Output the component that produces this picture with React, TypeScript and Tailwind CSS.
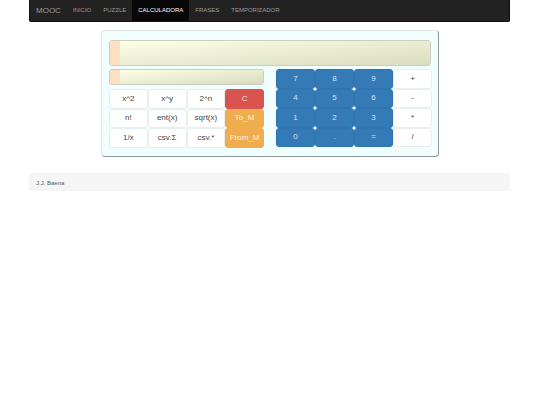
const nav = ["INICIO", "PUZZLE", "CALCULADORA", "FRASES", "TEMPORIZADOR"];
const leftKeys: [string, string][] = [
  ["x^2", "w"], ["x^y", "w"], ["2^n", "w"], ["C", "r"],
  ["n!", "w"], ["ent(x)", "w"], ["sqrt(x)", "w"], ["To_M", "o"],
  ["1/x", "w"], ["csv.Σ", "w"], ["csv.*", "w"], ["From_M", "o"],
];
const rightKeys: [string, string][] = [
  ["7", "b"], ["8", "b"], ["9", "b"], ["+", "w"],
  ["4", "b"], ["5", "b"], ["6", "b"], ["-", "w"],
  ["1", "b"], ["2", "b"], ["3", "b"], ["*", "w"],
  ["0", "b"], [".", "b"], ["=", "b"], ["/", "w"],
];

function Key({ label, kind }: { label: string; kind: string }) {
  const c =
    kind === "w"
      ? "bg-white border-[#e6eeee] text-[#444444]"
      : kind === "r"
        ? "bg-[#d9534f] border-[#d9534f] text-[#f6dcdb]"
        : kind === "o"
          ? "bg-[#f0ad4e] border-[#f0ad4e] text-[#fdf0dc]"
          : "bg-[#337ab7] border-[#3175b0] text-[#d5e4f1]";
  return (
    <div className={`h-[19.5px] w-full flex items-center justify-center rounded-[3px] border text-[8px] leading-none ${c}`}>
      {label}
    </div>
  );
}

function Display({ h, w }: { h: string; w: string }) {
  return (
    <div className={`${h} ${w} flex overflow-hidden rounded-[3px] border border-[#c9cfc0]`}>
      <div className="w-[10px] bg-[#ffdfc2] border-r border-[#f5e3c8]" />
      <div className="flex-1 bg-gradient-to-br from-[#fdffe6] to-[#d9dcc0]" />
    </div>
  );
}

export default function App() {
  return (
    <div className="min-h-[405px] bg-white font-['Liberation_Sans',Arial,sans-serif]">
      <div className="mx-[29px] w-[481px]">
        <nav className="h-[22px] flex items-stretch bg-[#222222] rounded-b-[2px] border border-t-0 border-[#111111] text-[6px] text-[#9d9d9d]">
          <div className="flex items-center pl-[6px] pr-[6px] text-[8px]">MOOC</div>
          {nav.map((n) => (
            <div
              key={n}
              className={`flex items-center px-[6px] ${n === "CALCULADORA" ? "bg-[#080808] text-white" : ""}`}
            >
              {n}
            </div>
          ))}
        </nav>

        <div className="mt-[8px] ml-[72px] w-[338px] h-[127px] rounded-[4px] border border-[#dde5e5] border-r-[1.5px] border-b-[1.5px] border-r-[#8a9595] border-b-[#8a9595] bg-[#f0fefe] pt-[9px] pl-[7px] pr-[6px]">
          <Display h="h-[26px]" w="w-[322px]" />
          <div className="mt-[3px] flex">
            <div className="w-[155px]">
              <Display h="h-[16px]" w="w-[155px]" />
              <div className="mt-[4px] grid grid-cols-4 gap-0">
                {leftKeys.map(([l, k]) => (
                  <Key key={l} label={l} kind={k} />
                ))}
              </div>
            </div>
            <div className="ml-[12px] w-[156px] grid grid-cols-4 gap-0 self-start">
              {rightKeys.map(([l, k]) => (
                <Key key={l} label={l} kind={k} />
              ))}
            </div>
          </div>
        </div>

        <footer className="mt-[16px] h-[18px] bg-[#f5f5f5] rounded-[2px] flex items-center pl-[7px] pt-[2px] text-[6px] text-[#555555]">
          J.J. Baena
        </footer>
      </div>
    </div>
  );
}
